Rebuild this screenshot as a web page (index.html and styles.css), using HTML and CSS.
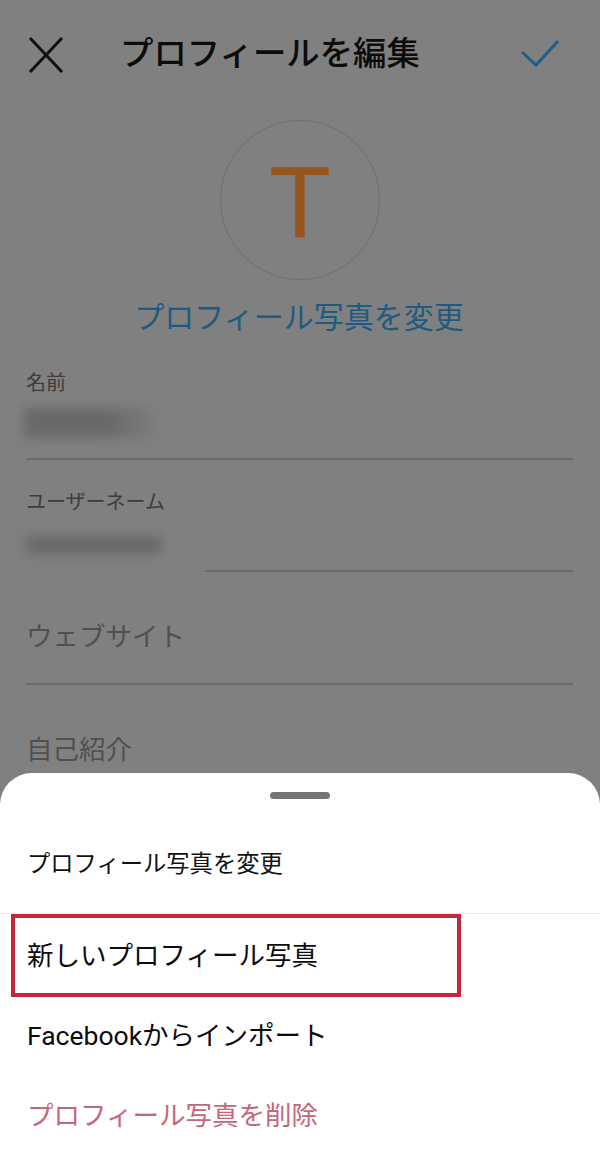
FILE: index.html
```html
<!DOCTYPE html>
<html lang="ja">
<head>
<meta charset="utf-8">
<title>プロフィールを編集</title>
<link rel="stylesheet" href="styles.css">
</head>
<body>
<div class="screen">
	<div class="topbar">
		<svg class="icon-close" width="36" height="36" viewBox="0 0 36 36"><path d="M2 1 L34 35 M34 1 L2 35"/></svg>
		<h1 class="title">プロフィールを編集</h1>
		<svg class="icon-check" width="38" height="28" viewBox="0 0 38 28"><path d="M1 12 L15 25 L37 1"/></svg>
	</div>

	<div class="avatar"><span class="avatar-letter">T</span></div>
	<p class="change-link">プロフィール写真を変更</p>

	<div class="field field-name">
		<label class="field-label">名前</label>
		<div class="blur-value blur-name"></div>
	</div>
	<div class="field field-user">
		<label class="field-label">ユーザーネーム</label>
		<div class="blur-value blur-user"></div>
	</div>
	<div class="field field-site">
		<span class="placeholder">ウェブサイト</span>
	</div>
	<div class="field-bio">
		<span class="placeholder">自己紹介</span>
	</div>

	<div class="sheet">
		<div class="handle"></div>
		<div class="sheet-head">プロフィール写真を変更</div>
		<ul class="menu">
			<li class="menu-item menu-marked">新しいプロフィール写真</li>
			<li class="menu-item">Facebookからインポート</li>
			<li class="menu-item menu-delete">プロフィール写真を削除</li>
		</ul>
	</div>
</div>
</body>
</html>
```

FILE: styles.css
```css
html, body {
	margin: 0;
	padding: 0;
}

body {
	background-color: #808080;
	font-family: "Roboto", "Noto Sans CJK JP", sans-serif;
}

.screen {
	position: relative;
	width: 600px;
	height: 1159px;
	overflow: hidden;
	background-color: #808080;
}

.topbar {
	display: flex;
	align-items: center;
	height: 104px;
	padding: 0 41px 0 28px;
}

.icon-close {
	margin-top: 6px;
	fill: none;
	stroke: #111;
	stroke-width: 3;
}

.icon-check {
	margin-top: 3px;
	fill: none;
	stroke: #1f5f86;
	stroke-width: 3;
}

.title {
	flex: 1;
	margin: 4px 0 0 56px;
	font-size: 33.4px;
	font-weight: 500;
	line-height: 44px;
	color: #0c0c0c;
}

.avatar {
	display: flex;
	align-items: center;
	justify-content: center;
	box-sizing: border-box;
	width: 160px;
	height: 160px;
	margin: 16px auto 0;
	border: 1px solid #6e6e6e;
	border-radius: 50%;
}

.avatar-letter {
	margin-top: 6px;
	font-family: "Liberation Sans", sans-serif;
	font-size: 102px;
	line-height: 100px;
	color: #98561f;
}

.change-link {
	margin: 16px 0 0;
	padding-right: 2px;
	text-align: center;
	font-size: 30px;
	line-height: 44px;
	color: #1f5a80;
}

.field {
	position: relative;
	box-sizing: border-box;
	margin: 0 27px 0 26px;
	border-bottom: 2px solid #6c6c6c;
}

.field-name {
	height: 99px;
	margin-top: 21px;
	padding-top: 8px;
}

.field-user {
	height: 112px;
	padding-top: 28px;
}

/* the blur patch in the shot also wipes the start of this line */
.field-user::after {
	content: "";
	position: absolute;
	left: 0;
	bottom: -2px;
	width: 179px;
	height: 2px;
	background-color: #7e7e7e;
}

.field-site {
	height: 113px;
	padding-top: 46px;
}

.field-label {
	display: block;
	font-size: 20px;
	line-height: 28px;
	color: #3d3d3d;
}

.blur-value {
	filter: blur(6px);
}

.blur-name {
	width: 135px;
	height: 30px;
	margin-top: 11px;
	margin-left: -2px;
	background: linear-gradient(to right, #686868 60%, #7e7e7e);
}

.blur-user {
	width: 135px;
	height: 16px;
	margin-top: 21px;
	background-color: #666;
}

.placeholder {
	display: block;
	font-size: 26.5px;
	line-height: 38px;
	color: #505050;
}

.field-bio {
	margin: 46px 26px 0;
}

/* bottom sheet lies over the form */
.sheet {
	position: absolute;
	left: 0;
	right: 0;
	top: 773px;
	bottom: 0;
	background-color: #fff;
	border-radius: 32px 32px 0 0;
}

.handle {
	width: 60px;
	height: 7px;
	margin: 19px auto 0;
	border-radius: 4px;
	background-color: #757575;
}

.sheet-head {
	box-sizing: border-box;
	height: 115px;
	padding-top: 48px;
	padding-left: 27px;
	border-bottom: 1px solid #ececec;
	font-size: 23.3px;
	line-height: 34px;
	color: #111;
}

.menu {
	list-style: none;
	margin: 0;
	padding: 0;
}

.menu-item {
	height: 80px;
	padding-left: 27px;
	font-size: 26.5px;
	line-height: 84px;
	color: #0c0c0c;
}

.menu-marked {
	position: relative;
}

.menu-marked::after {
	content: "";
	position: absolute;
	left: 11px;
	top: 0;
	width: 450px;
	height: 83px;
	box-sizing: border-box;
	border: 4px solid #c3273a;
}

.menu-delete {
	color: #c4677c;
}
```
